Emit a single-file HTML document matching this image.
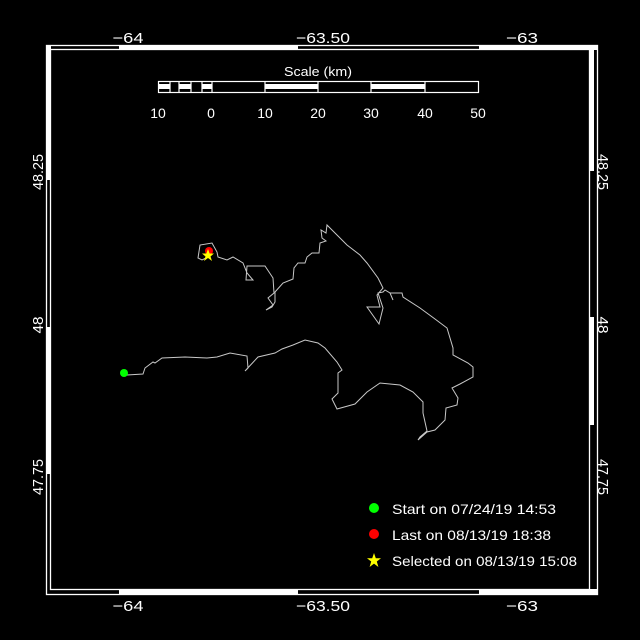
<!DOCTYPE html>
<html><head><meta charset="utf-8"><style>
html,body{margin:0;padding:0;background:#000;}
svg{display:block}
text{font-family:"Liberation Sans",sans-serif;fill:#fff;}
</style></head><body>
<svg width="640" height="640" viewBox="0 0 640 640" xmlns="http://www.w3.org/2000/svg">
<rect width="640" height="640" fill="#000"/>
<g fill="#fff">
<rect x="119" y="45" width="179" height="5"/>
<rect x="479" y="45" width="118" height="5"/>
<rect x="119" y="589" width="179" height="5"/>
<rect x="479" y="589" width="118" height="5"/>
<rect x="46" y="45" width="5" height="135"/>
<rect x="46" y="327" width="5" height="147"/>
<rect x="589" y="45" width="5" height="126"/>
<rect x="589" y="317" width="5" height="108"/>
</g>
<rect x="46.5" y="45.5" width="551" height="549" fill="none" stroke="#fff" stroke-width="1.3"/>
<rect x="50.5" y="49.5" width="539" height="540" fill="none" stroke="#fff" stroke-width="1.3"/>
<g font-size="15" text-anchor="middle" lengthAdjust="spacingAndGlyphs">
<text x="128" y="43" textLength="31" lengthAdjust="spacingAndGlyphs">−64</text>
<text x="323" y="43" textLength="54" lengthAdjust="spacingAndGlyphs">−63.50</text>
<text x="522" y="43" textLength="32" lengthAdjust="spacingAndGlyphs">−63</text>
<text x="128" y="611" textLength="31" lengthAdjust="spacingAndGlyphs">−64</text>
<text x="323" y="611" textLength="54" lengthAdjust="spacingAndGlyphs">−63.50</text>
<text x="522" y="611" textLength="32" lengthAdjust="spacingAndGlyphs">−63</text>
<text transform="translate(43,172) rotate(-90)" textLength="36" lengthAdjust="spacingAndGlyphs">48.25</text>
<text transform="translate(43,325) rotate(-90)" textLength="17" lengthAdjust="spacingAndGlyphs">48</text>
<text transform="translate(43,477) rotate(-90)" textLength="36" lengthAdjust="spacingAndGlyphs">47.75</text>
<text transform="translate(598,172) rotate(90)" textLength="36" lengthAdjust="spacingAndGlyphs">48.25</text>
<text transform="translate(598,325) rotate(90)" textLength="17" lengthAdjust="spacingAndGlyphs">48</text>
<text transform="translate(598,477) rotate(90)" textLength="36" lengthAdjust="spacingAndGlyphs">47.75</text>
</g>
<text x="318" y="76" font-size="13" text-anchor="middle" textLength="68" lengthAdjust="spacingAndGlyphs">Scale (km)</text>
<rect x="158.5" y="81.5" width="320" height="11" fill="none" stroke="#fff" stroke-width="1.2"/>
<g fill="#fff">
<rect x="158" y="84" width="12" height="5"/><rect x="179" y="84" width="12" height="5"/><rect x="202" y="84" width="10" height="5"/>
<rect x="265" y="84" width="53" height="5"/><rect x="371" y="84" width="54" height="5"/>
</g>
<g stroke="#fff" stroke-width="1.2">
<line x1="170" y1="82" x2="170" y2="92"/><line x1="179" y1="82" x2="179" y2="92"/><line x1="191" y1="82" x2="191" y2="92"/><line x1="202" y1="82" x2="202" y2="92"/><line x1="212" y1="82" x2="212" y2="92"/>
<line x1="265" y1="82" x2="265" y2="92"/><line x1="318" y1="82" x2="318" y2="92"/><line x1="371" y1="82" x2="371" y2="92"/><line x1="425" y1="82" x2="425" y2="92"/>
</g>
<g font-size="14" text-anchor="middle">
<text x="158" y="118">10</text><text x="211" y="118">0</text><text x="265" y="118">10</text><text x="318" y="118">20</text><text x="371" y="118">30</text><text x="425" y="118">40</text><text x="478" y="118">50</text>
</g>
<polyline fill="none" stroke="#c8c8c8" stroke-width="1" points="124,373 127,375 143,374 145,368 153,362 155,363 162,358 185,357 207,358 217,357 230,353 247,356 248,368 245,371 258,357 275,353 282,349 293,345 305,340 318,343 325,348 337,362 342,370 338,373 338,393 332,399 337,409 355,404 367,392 380,383 400,385 413,392 423,402 423,413 427,431 420,437 418,440 427,432 435,430 445,420 446,408 457,405 458,398 452,388 460,384 473,377 473,367 468,363 453,355 453,348 447,328 435,319 420,308 403,297 402,293 390,293 393,300 390,293 385,290 383,292 378,293 383,308 379,324 367,307 380,307 377,295 383,288 378,278 367,263 360,255 347,245 330,228 327,225 326,233 321,230 322,238 326,241 320,243 319,253 312,253 307,257 305,263 298,263 294,268 293,279 283,283 275,292 275,302 272,307 266,310 273,305 268,298 274,293 273,278 265,266 247,266 246,280 253,280 247,273 243,263 233,257 227,260 218,257 217,252 212,243 200,245 198,258 202,260 208,257"/>
<circle cx="124" cy="373" r="4" fill="#00ff00"/>
<circle cx="209" cy="251" r="4" fill="#ff0000"/>
<polygon fill="#ffff00" points="208,249 209.6,253.5 214,253.5 210.5,256.5 212,261 208,258 204,261 205.5,256.5 202,253.5 206.4,253.5"/>
<circle cx="374" cy="508" r="5" fill="#00ff00"/>
<circle cx="374" cy="534" r="5" fill="#ff0000"/>
<polygon fill="#ffff00" points="374,553 375.8,558.3 381,558.3 376.8,561.5 378.4,567 374,563.6 369.6,567 371.2,561.5 367,558.3 372.2,558.3"/>
<g font-size="14">
<text x="392" y="514" textLength="164" lengthAdjust="spacingAndGlyphs">Start on 07/24/19 14:53</text>
<text x="392" y="540" textLength="159" lengthAdjust="spacingAndGlyphs">Last on 08/13/19 18:38</text>
<text x="392" y="566" textLength="185" lengthAdjust="spacingAndGlyphs">Selected on 08/13/19 15:08</text>
</g>
</svg>
</body></html>
